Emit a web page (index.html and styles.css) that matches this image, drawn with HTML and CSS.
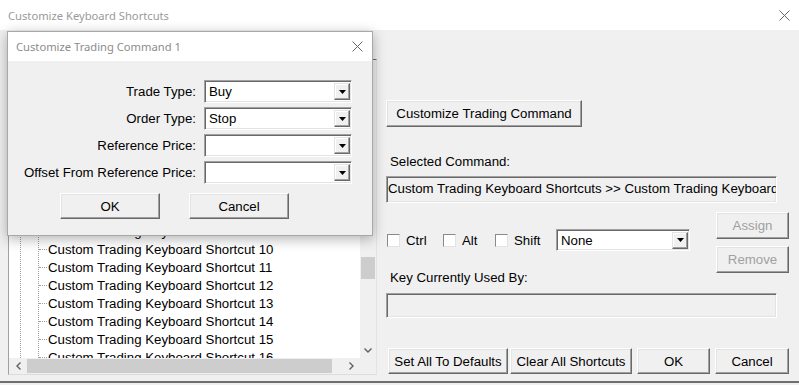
FILE: index.html
```html
<!DOCTYPE html>
<html lang="en">

<head>
  <meta charset="UTF-8">
  <title>Customize Keyboard Shortcuts</title>
  <link rel="stylesheet" href="styles.css">
</head>

<body>
  <div class="window">
    <div class="titlebar">
      <span>Customize Keyboard Shortcuts</span>
      <svg class="close-icon" width="11" height="11" viewBox="0 0 11 11"><path d="M0.5 0.5 L10.5 10.5 M10.5 0.5 L0.5 10.5" /></svg>
    </div>

    <div class="main">
      <div class="tree-panel">
        <div class="tree">
          <div class="tree-view">
            <!-- rows above shortcut 9 sit under the dialog -->
            <div class="tree-level">
              <ul class="children">
                <li><span class="dash"></span>Custom Trading Keyboard Shortcut 9</li>
                <li><span class="dash"></span>Custom Trading Keyboard Shortcut 10</li>
                <li><span class="dash"></span>Custom Trading Keyboard Shortcut 11</li>
                <li><span class="dash"></span>Custom Trading Keyboard Shortcut 12</li>
                <li><span class="dash"></span>Custom Trading Keyboard Shortcut 13</li>
                <li><span class="dash"></span>Custom Trading Keyboard Shortcut 14</li>
                <li><span class="dash"></span>Custom Trading Keyboard Shortcut 15</li>
                <li><span class="dash"></span>Custom Trading Keyboard Shortcut 16</li>
              </ul>
            </div>
          </div>
          <div class="vscroll">
            <div class="scroll-arrow">
              <svg width="8" height="5" viewBox="0 0 8 5"><polyline points="0.5,0.5 4,4 7.5,0.5" /></svg>
            </div>
            <div class="vthumb"></div>
            <div class="scroll-arrow">
              <svg width="8" height="5" viewBox="0 0 8 5"><polyline points="0.5,0.5 4,4 7.5,0.5" /></svg>
            </div>
          </div>
          <div class="hscroll">
            <div class="scroll-arrow">
              <svg width="5" height="8" viewBox="0 0 5 8"><polyline points="4.5,0.5 1,4 4.5,7.5" /></svg>
            </div>
            <div class="hthumb"></div>
            <div class="scroll-arrow">
              <svg width="5" height="8" viewBox="0 0 5 8"><polyline points="0.5,0.5 4,4 0.5,7.5" /></svg>
            </div>
          </div>
          <div class="corner"></div>
        </div>
      </div>

      <div class="side">
        <button class="btn cmd-btn">Customize Trading Command</button>

        <div class="field-label">Selected Command:</div>
        <div class="textbox">Custom Trading Keyboard Shortcuts &gt;&gt; Custom Trading Keyboard Shortcut 1</div>

        <div class="keys-row">
          <div class="keys-left">
            <div class="checks">
              <label class="check"><span class="check-box"></span>Ctrl</label>
              <label class="check"><span class="check-box"></span>Alt</label>
              <label class="check"><span class="check-box"></span>Shift</label>
              <div class="combo key-combo">
                <span>None</span>
                <span class="combo-btn"><svg width="7" height="4" viewBox="0 0 7 4"><polygon points="0,0 7,0 3.5,4" /></svg></span>
              </div>
            </div>
            <div class="field-label used-label">Key Currently Used By:</div>
          </div>
          <div class="keys-right">
            <button class="btn side-btn" disabled>Assign</button>
            <button class="btn side-btn" disabled>Remove</button>
          </div>
        </div>

        <div class="textbox used-box"></div>

        <div class="bottom-row">
          <button class="btn defaults-btn">Set All To Defaults</button>
          <button class="btn clear-btn">Clear All Shortcuts</button>
          <button class="btn ok-btn">OK</button>
          <button class="btn cancel-btn">Cancel</button>
        </div>
      </div>
    </div>

    <!-- Customize Trading Command dialog, on top of the main window -->
    <div class="dialog">
      <div class="dialog-title">
        <span>Customize Trading Command 1</span>
        <svg class="close-icon" width="11" height="11" viewBox="0 0 11 11"><path d="M0.5 0.5 L10.5 10.5 M10.5 0.5 L0.5 10.5" /></svg>
      </div>
      <div class="dialog-body">
        <div class="form">
          <label>Trade Type:</label>
          <div class="combo">
            <span>Buy</span>
            <span class="combo-btn"><svg width="7" height="4" viewBox="0 0 7 4"><polygon points="0,0 7,0 3.5,4" /></svg></span>
          </div>
          <label>Order Type:</label>
          <div class="combo">
            <span>Stop</span>
            <span class="combo-btn"><svg width="7" height="4" viewBox="0 0 7 4"><polygon points="0,0 7,0 3.5,4" /></svg></span>
          </div>
          <label>Reference Price:</label>
          <div class="combo">
            <span></span>
            <span class="combo-btn"><svg width="7" height="4" viewBox="0 0 7 4"><polygon points="0,0 7,0 3.5,4" /></svg></span>
          </div>
          <label>Offset From Reference Price:</label>
          <div class="combo">
            <span></span>
            <span class="combo-btn"><svg width="7" height="4" viewBox="0 0 7 4"><polygon points="0,0 7,0 3.5,4" /></svg></span>
          </div>
        </div>
        <div class="dialog-actions">
          <button class="btn dialog-btn">OK</button>
          <button class="btn dialog-btn">Cancel</button>
        </div>
      </div>
    </div>
  </div>
</body>

</html>
```

FILE: styles.css
```css
* {
  margin: 0;
  padding: 0;
  box-sizing: border-box;
}

body {
  width: 799px;
  height: 385px;
  overflow: hidden;
  background-color: #f0f0f0;
  font-family: "Liberation Sans", Arial, sans-serif;
  font-size: 13.25px;
  color: #000;
}

.window {
  position: relative;
  height: 385px;
}

.titlebar {
  height: 30px;
  background-color: #fff;
  display: flex;
  align-items: center;
  justify-content: space-between;
  padding: 0 9px 0 8px;
  font-family: "Noto Sans", sans-serif;
  font-size: 11.2px;
  color: #9a9a9a;
}

.close-icon path {
  stroke: #666;
  stroke-width: 1;
  fill: none;
}

.main {
  display: flex;
  height: 353px;
  border-bottom: 2px solid #6e6e6e;
}

/* Tree view */
.tree-panel {
  padding: 29px 0 0 8px;
}

.tree {
  width: 369px;
  height: 316px;
  display: grid;
  grid-template-columns: 1fr 16px;
  grid-template-rows: 1fr 16px;
  background-color: #fff;
  border: 1px solid;
  border-color: #6e6e6e #e3e3e3 #dcdcdc #a0a0a0;
}

.tree-view {
  overflow: hidden;
  padding-left: 11px;
  white-space: nowrap;
}

.tree-level {
  border-left: 1px dotted #a0a0a0;
  height: 100%;
  padding-top: 162px;
}

.children {
  list-style: none;
  margin-left: 17px;
  border-left: 1px dotted #a0a0a0;
}

.children li {
  height: 18px;
  display: flex;
  align-items: center;
}

.dash {
  width: 8px;
  height: 0;
  border-top: 1px dotted #a0a0a0;
  margin-right: 1px;
}

.vscroll {
  background-color: #f0f0f0;
  display: flex;
  flex-direction: column;
  justify-content: space-between;
}

.vscroll .scroll-arrow:first-child svg {
  transform: rotate(180deg);
}

.vthumb {
  height: 22px;
  margin: 0 1px;
  background-color: #cdcdcd;
  margin-top: 181px;
  margin-bottom: auto;
}

.scroll-arrow {
  width: 16px;
  height: 16px;
  display: flex;
  align-items: center;
  justify-content: center;
}

.scroll-arrow polyline {
  stroke: #606060;
  stroke-width: 1.4;
  fill: none;
}

.hscroll {
  background-color: #f0f0f0;
  display: flex;
}

.hscroll .scroll-arrow {
  width: 18px;
}

.hthumb {
  width: 305px;
  margin: 1px 0;
  background-color: #cdcdcd;
}

.hscroll .scroll-arrow:last-child {
  margin-left: auto;
}

.corner {
  background-color: #f0f0f0;
}

/* Buttons and fields */
.btn {
  font-family: "Liberation Sans", Arial, sans-serif;
  font-size: 13.25px;
  color: #000;
  background-color: #f0f0f0;
  border: 1px solid;
  border-color: #fff #696969 #696969 #fff;
  box-shadow: inset -1px -1px #a0a0a0, inset 1px 1px #e3e3e3;
  white-space: nowrap;
}

.btn:disabled {
  color: #a0a0a0;
}

.textbox,
.combo {
  border: 1px solid;
  border-color: #a0a0a0 #fff #fff #a0a0a0;
  box-shadow: inset 1px 1px #696969, inset -1px -1px #e3e3e3;
}

.combo {
  height: 23px;
  background-color: #fff;
  display: flex;
  align-items: center;
  padding: 0 1px 0 4px;
}

.combo-btn {
  margin-left: auto;
  width: 16px;
  height: 17px;
  display: flex;
  align-items: center;
  justify-content: center;
  background-color: #f0f0f0;
  border: 1px solid;
  border-color: #e3e3e3 #696969 #696969 #e3e3e3;
  box-shadow: inset -1px -1px #a0a0a0, inset 1px 1px #fff;
}

/* Right side */
.side {
  width: 403px;
  margin-left: 9px;
  padding-top: 70px;
}

.cmd-btn {
  width: 196px;
  height: 27px;
}

.field-label {
  margin: 27px 0 0 4px;
  line-height: 15px;
}

.textbox {
  margin-top: 7px;
  width: 391px;
  height: 27px;
  padding-left: 1px;
  line-height: 23px;
  white-space: nowrap;
  overflow: hidden;
}

.keys-row {
  margin-top: 9px;
  display: flex;
  justify-content: space-between;
}

.keys-left {
  padding-top: 17px;
}

.checks {
  display: grid;
  grid-template-columns: 56px 52px 61px 134px;
  align-items: center;
  padding-left: 1px;
}

.check {
  display: flex;
  align-items: center;
  gap: 6px;
}

.check-box {
  width: 13px;
  height: 13px;
  background-color: #fff;
  border: 1px solid;
  border-color: #8a8a8a #e3e3e3 #e3e3e3 #8a8a8a;
}

.key-combo {
  height: 22px;
}

.used-label {
  margin-top: 19px;
}

.keys-right {
  display: flex;
  flex-direction: column;
  gap: 7px;
}

.side-btn {
  width: 73px;
  height: 27px;
}

.used-box {
  margin-top: 8px;
  height: 25px;
}

.bottom-row {
  margin-top: 30px;
  padding-left: 2px;
  display: flex;
  height: 26px;
}

.defaults-btn {
  width: 120px;
}

.clear-btn {
  width: 122px;
  margin-left: 2px;
}

.ok-btn {
  width: 73px;
  margin-left: 5px;
}

.cancel-btn {
  width: 74px;
  margin-left: 5px;
}

/* Dialog */
.dialog {
  position: absolute;
  left: 7px;
  top: 31px;
  width: 366px;
  height: 205px;
  background-color: #f0f0f0;
  border: 1px solid #a8a8a8;
  box-shadow: 0 3px 12px rgba(0, 0, 0, 0.3);
}

.dialog-title {
  height: 29px;
  background-color: #fff;
  display: flex;
  align-items: center;
  justify-content: space-between;
  padding: 0 9px 0 8px;
  font-family: "Noto Sans", sans-serif;
  font-size: 11.2px;
  color: #8c8c8c;
}

.dialog-body {
  padding-top: 19px;
}

.form {
  display: grid;
  grid-template-columns: 188px 148px;
  grid-auto-rows: 23px;
  column-gap: 8px;
  row-gap: 4px;
}

.form label {
  text-align: right;
  align-self: center;
  white-space: nowrap;
}

.dialog-actions {
  margin-top: 9px;
  padding-left: 52px;
  display: flex;
  gap: 29px;
}

.dialog-btn {
  width: 100px;
  height: 26px;
}
```
